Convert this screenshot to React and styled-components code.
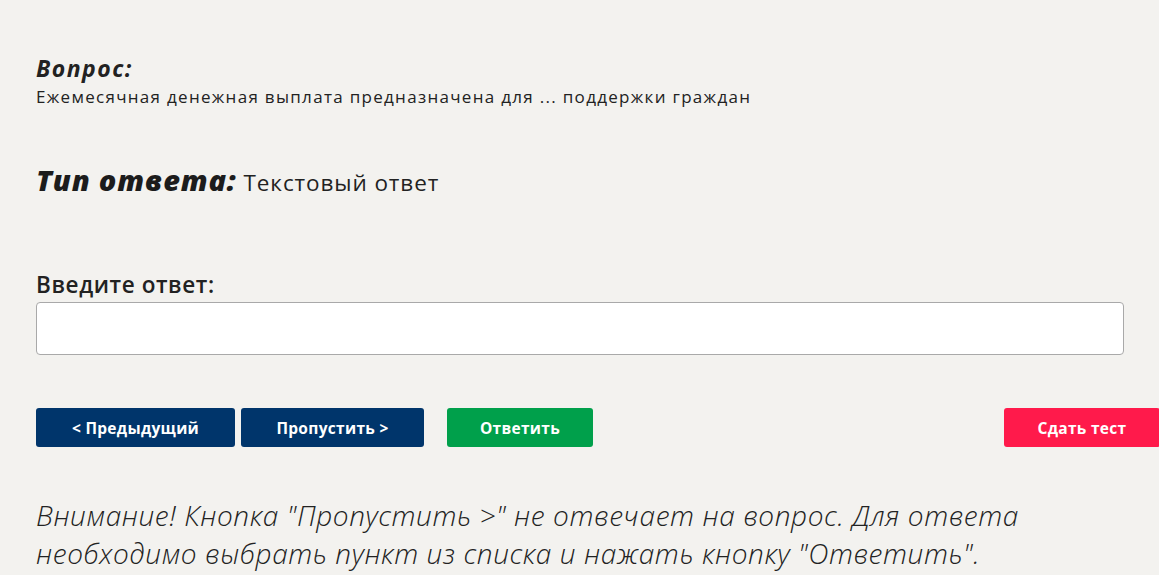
import React from "react";
import styled, { createGlobalStyle } from "styled-components";

const GlobalStyle = createGlobalStyle`
  html, body {
    margin: 0;
    padding: 0;
    background: #f3f2ef;
    font-family: "Open Sans", "Noto Sans", sans-serif;
    color: #222;
  }
`;

const Page = styled.div`
  padding: 51px 0 0 36px;
  width: 1159px;
  box-sizing: border-box;
  overflow: hidden;
`;

const Label = styled.div`
  font-weight: 700;
  font-style: italic;
  font-size: 23px;
  letter-spacing: 1.5px;
  line-height: 34px;
  color: #222;
`;

const QuestionText = styled.div`
  font-size: 17px;
  letter-spacing: 1.3px;
  line-height: 24px;
  color: #222;
`;

const TypeRow = styled.div`
  margin-top: 51px;
  display: flex;
  align-items: baseline;
  gap: 7px;
`;

const TypeLabel = styled.span`
  font-weight: 800;
  font-style: italic;
  font-size: 29px;
  letter-spacing: 0.8px;
  color: #1c1c1c;
`;

const TypeValue = styled.span`
  font-size: 22.5px;
  letter-spacing: 0.9px;
`;

const AnswerLabel = styled.div`
  margin-top: 71px;
  font-size: 22.5px;
  font-weight: 600;
  letter-spacing: 0.6px;
  line-height: 30px;
`;

const AnswerInput = styled.input`
  display: block;
  margin-top: 2px;
  width: 1088px;
  height: 53px;
  box-sizing: border-box;
  border: 1px solid #a9a9a9;
  border-radius: 4px;
  background: #fff;
  font-size: 18px;
  padding: 0 12px;
  outline: none;
`;

const Actions = styled.div`
  margin-top: 53px;
  display: flex;
  align-items: center;
`;

const Button = styled.button`
  height: 39px;
  width: ${(p) => p.$w}px;
  margin-left: ${(p) => p.$ml || 0}px;
  border: none;
  border-radius: 3px;
  background: ${(p) => p.$bg};
  color: #fff;
  font-family: "Open Sans", "Noto Sans", sans-serif;
  font-weight: 700;
  font-size: 15.5px;
  letter-spacing: 0.3px;
  cursor: pointer;
  flex-shrink: 0;
`;

const Notice = styled.p`
  margin: 49px 0 0;
  font-style: italic;
  font-weight: 300;
  font-size: 28px;
  letter-spacing: 0.6px;
  line-height: 38px;
  color: #222;
  max-width: 1060px;
`;

export default function App() {
  return (
    <>
      <GlobalStyle />
      <Page>
        <Label>Вопрос:</Label>
        <QuestionText>
          Ежемесячная денежная выплата предназначена для ... поддержки граждан
        </QuestionText>
        <TypeRow>
          <TypeLabel>Тип ответа:</TypeLabel>
          <TypeValue>Текстовый ответ</TypeValue>
        </TypeRow>
        <AnswerLabel>Введите ответ:</AnswerLabel>
        <AnswerInput type="text" />
        <Actions>
          <Button $w={199} $bg="#00356b">&lt; Предыдущий</Button>
          <Button $w={183} $ml={6} $bg="#00356b">Пропустить &gt;</Button>
          <Button $w={146} $ml={23} $bg="#00a04b">Ответить</Button>
          <Button $w={156} $ml={411} $bg="#ff1a4b">Сдать тест</Button>
        </Actions>
        <Notice>
          Внимание! Кнопка "Пропустить &gt;" не отвечает на вопрос. Для ответа
          необходимо выбрать пункт из списка и нажать кнопку "Ответить".
        </Notice>
      </Page>
    </>
  );
}
